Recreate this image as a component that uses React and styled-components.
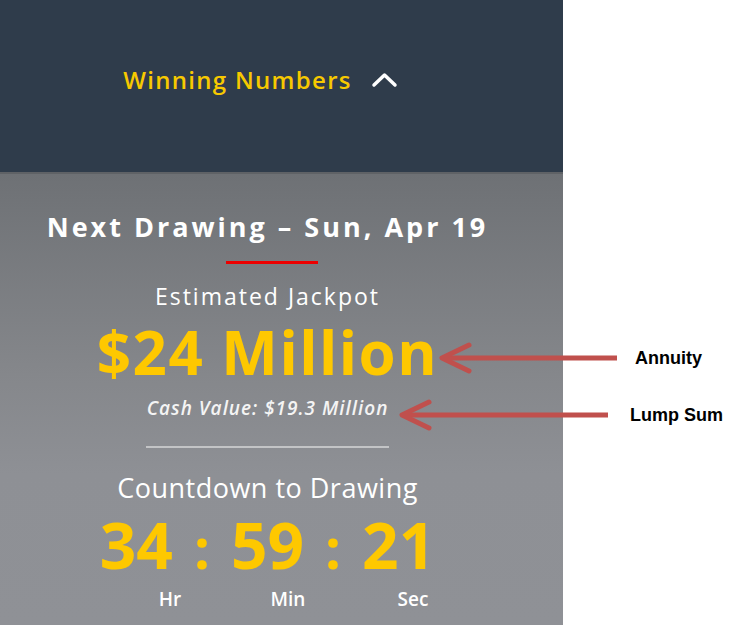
import React from 'react';
import styled, { createGlobalStyle } from 'styled-components';

const GlobalStyle = createGlobalStyle`
  html, body {
    margin: 0;
    padding: 0;
    background: #ffffff;
  }
  body {
    font-family: "Open Sans", "Liberation Sans", sans-serif;
  }
`;

function Arrow({ width }) {
  return (
    <svg width={width} height="34" viewBox={`0 0 ${width} 34`}>
      <line x1="4" y1="17" x2={width - 2} y2="17" stroke="#c0504d" strokeWidth="5" />
      <polyline
        points="31,4 4,17 31,30"
        fill="none"
        stroke="#c0504d"
        strokeWidth="5"
        strokeLinecap="round"
        strokeLinejoin="round"
      />
    </svg>
  );
}

function Chevron() {
  return (
    <svg width="27" height="16" viewBox="0 0 27 16">
      <polyline
        points="3,13 13.5,3 24,13"
        fill="none"
        stroke="#ffffff"
        strokeWidth="3.5"
        strokeLinecap="round"
        strokeLinejoin="round"
      />
    </svg>
  );
}

function App() {
  return (
    <Page>
      <GlobalStyle />
      <Panel>
        <Header>
          <HeaderTitle>Winning Numbers</HeaderTitle>
          <Chevron />
        </Header>
        <Body>
          <Title>Next Drawing – Sun, Apr 19</Title>
          <Underline />
          <Caption>Estimated Jackpot</Caption>
          <Jackpot>$24 Million</Jackpot>
          <CashValue>Cash Value: $19.3 Million</CashValue>
          <Divider />
          <Countdown>Countdown to Drawing</Countdown>
          <Clock>
            <Digits>34</Digits>
            <Colon>:</Colon>
            <Digits>59</Digits>
            <Colon>:</Colon>
            <Digits>21</Digits>
          </Clock>
          <UnitRow>
            <Unit>Hr</Unit>
            <Unit $gap={58}>Min</Unit>
            <Unit $gap={65}>Sec</Unit>
          </UnitRow>
        </Body>
      </Panel>

      <Note $top={341} $left={438} $gap={16}>
        <Arrow width={181} />
        <NoteLabel>Annuity</NoteLabel>
      </Note>
      <Note $top={398} $left={398} $gap={20}>
        <Arrow width={212} />
        <NoteLabel>Lump Sum</NoteLabel>
      </Note>
    </Page>
  );
}

export default App;

const Page = styled.div`
  position: relative;
  display: flex;
  width: 745px;
  height: 625px;
  background: #ffffff;
  overflow: hidden;
`;

const Panel = styled.div`
  display: flex;
  flex-direction: column;
  width: 563px;
  height: 625px;
  box-shadow: inset -3px 0 0 rgba(0, 0, 0, 0.1);
`;

const Header = styled.div`
  display: flex;
  align-items: center;
  justify-content: center;
  gap: 19px;
  height: 172px;
  padding: 0 42px 12px 0;
  box-sizing: border-box;
  background: #2f3c4b;
`;

const HeaderTitle = styled.span`
  font-size: 24px;
  font-weight: 600;
  letter-spacing: 1.3px;
  color: #f7c900;
  line-height: 1;
`;

const Body = styled.div`
  flex: 1;
  display: flex;
  flex-direction: column;
  align-items: center;
  padding-right: 28px;
  border-top: 2px solid #5f6266;
  background: linear-gradient(#6e7175 0px, #85878b 200px, #8e9095 300px, #8f9196 100%);
  color: #ffffff;
`;

const Title = styled.div`
  margin-top: 39px;
  font-size: 27px;
  font-weight: 700;
  letter-spacing: 3px;
  line-height: 1;
`;

const Underline = styled.div`
  width: 92px;
  height: 3px;
  margin: 21px 0 0 8px;
  background: #ec0000;
`;

const Caption = styled.div`
  margin-top: 21px;
  font-size: 23px;
  font-weight: 400;
  letter-spacing: 2px;
  line-height: 1;
`;

const Jackpot = styled.div`
  margin-top: 14px;
  font-size: 60px;
  font-weight: 700;
  letter-spacing: 1.5px;
  line-height: 1;
  color: #fec800;
`;

const CashValue = styled.div`
  margin-top: 17px;
  font-size: 19px;
  font-weight: 600;
  font-style: italic;
  letter-spacing: 1px;
  line-height: 1;
  color: #f4f4f4;
`;

const Divider = styled.div`
  width: 243px;
  height: 2px;
  margin-top: 28px;
  background: #c3c4c6;
`;

const Countdown = styled.div`
  margin-top: 26px;
  font-size: 27px;
  font-weight: 400;
  letter-spacing: 0.5px;
  line-height: 1;
`;

const Clock = styled.div`
  display: flex;
  align-items: baseline;
  gap: 21px;
  margin-top: 12px;
  color: #fec800;
  font-size: 64px;
  font-weight: 700;
  line-height: 1;
`;

const Digits = styled.span``;

const Colon = styled.span`
  font-size: 56px;
`;

const UnitRow = styled.div`
  display: flex;
  align-self: stretch;
  margin-top: 13px;
  padding-left: 140px;
`;

const Unit = styled.div`
  width: 60px;
  margin-left: ${(p) => p.$gap || 0}px;
  text-align: center;
  font-size: 19px;
  font-weight: 600;
  line-height: 1;
`;

const Note = styled.div`
  position: absolute;
  top: ${(p) => p.$top}px;
  left: ${(p) => p.$left}px;
  display: flex;
  align-items: center;
  gap: ${(p) => p.$gap}px;
`;

const NoteLabel = styled.span`
  font-family: "Liberation Sans", Arial, sans-serif;
  font-size: 18px;
  font-weight: 700;
  color: #000000;
`;
